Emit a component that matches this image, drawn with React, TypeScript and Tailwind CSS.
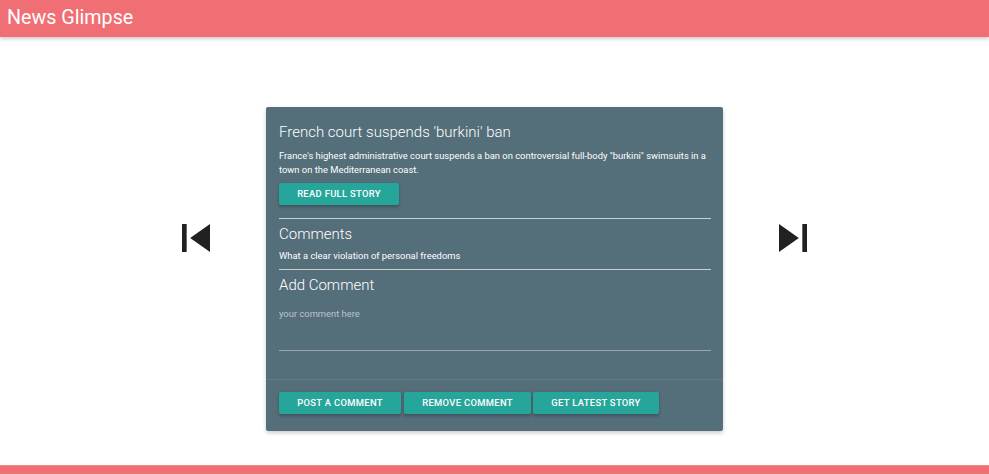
import React from "react";

function SkipPrev() {
  return (
    <svg width="56" height="56" viewBox="0 0 24 24" fill="#212121">
      <path d="M6 6h2v12H6zm3.5 6l8.5 6V6z" />
    </svg>
  );
}

function SkipNext() {
  return (
    <svg width="56" height="56" viewBox="0 0 24 24" fill="#212121">
      <path d="M6 18l8.5-6L6 6v12zM16 6v12h2V6h-2z" />
    </svg>
  );
}

const btn =
  "h-[22px] bg-[#26a69a] text-white uppercase font-medium text-[9.4px] tracking-[0.33px] leading-[22px] text-center rounded-[2px] shadow-[0_1.5px_3px_rgba(0,0,0,0.25)]";

export default function App() {
  return (
    <div
      className="h-screen flex flex-col bg-white overflow-hidden"
      style={{ fontFamily: "Roboto, 'Noto Sans', sans-serif" }}
    >
      <header className="h-[37px] shrink-0 bg-[#ef6f74] shadow-[0_2px_4px_rgba(0,0,0,0.2)] flex items-center relative z-10">
        <span className="pl-[7px] text-white text-[19.7px] leading-none -mt-[1px]">News Glimpse</span>
      </header>
      <main className="flex-1 flex justify-center items-start gap-[42px] pt-[70px]">
        <div className="mt-[103px] w-[56px] h-[56px]">
          <SkipPrev />
        </div>
        <div className="w-[457px] bg-[#546e7a] rounded-[2px] shadow-[0_2px_4px_rgba(0,0,0,0.2)] text-white">
          <div className="pt-[13px] pl-[13px] pr-[12px] pb-[28px]">
            <div className="text-[15px] leading-[24px] font-light">French court suspends 'burkini' ban</div>
            <p className="mt-[5px] text-[9.4px] leading-[13.5px]">
              France's highest administrative court suspends a ban on controversial full-body "burkini" swimsuits in a
              town on the Mediterranean coast.
            </p>
            <div className={btn + " mt-[7px] w-[120px]"}>Read full story</div>
            <div className="mt-[13px] h-px bg-[#c8d0d4]" />
            <div className="mt-[4px] text-[15px] leading-[22px] font-light">Comments</div>
            <p className="mt-[4px] text-[9.4px] leading-[14px]">What a clear violation of personal freedoms</p>
            <div className="mt-[6px] h-px bg-[#c8d0d4]" />
            <div className="mt-[4px] text-[15px] leading-[22px] font-light">Add Comment</div>
            <div className="mt-[11px] h-[44px] border-b border-[#9ea5a8] text-[9.4px] leading-[14px] text-[#bcc4c8]">
              your comment here
            </div>
          </div>
          <div className="border-t border-[rgba(160,160,160,0.2)] pt-[12px] pb-[17px] pl-[13px] flex">
            <div className={btn + " w-[122px]"}>Post a comment</div>
            <div className={btn + " w-[127px] ml-[3px]"}>Remove comment</div>
            <div className={btn + " w-[126px] ml-[2px]"}>Get latest story</div>
          </div>
        </div>
        <div className="mt-[103px] w-[56px] h-[56px]">
          <SkipNext />
        </div>
      </main>
      <footer className="h-[9px] shrink-0 bg-[#ef6f74] border-t border-[#f28a8e]" />
    </div>
  );
}
